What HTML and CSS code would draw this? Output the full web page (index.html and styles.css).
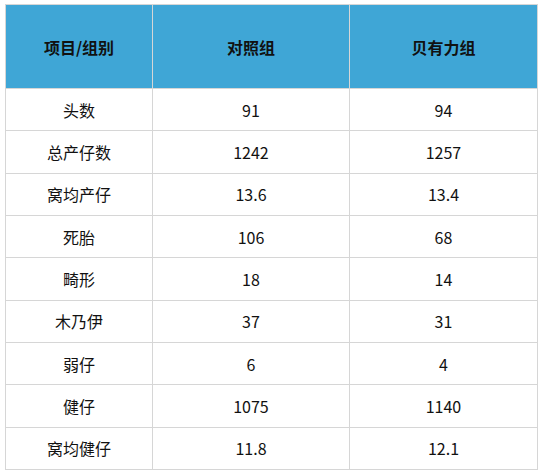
FILE: index.html
```html
<!DOCTYPE html>
<html lang="zh">
<head>
<meta charset="utf-8">
<link rel="stylesheet" href="styles.css">
</head>
<body>
<table class="data">
  <colgroup><col class="c1"><col class="c2"><col class="c3"></colgroup>
  <thead>
    <tr><th>项目/组别</th><th>对照组</th><th>贝有力组</th></tr>
  </thead>
  <tbody>
    <tr><td>头数</td><td>91</td><td>94</td></tr>
    <tr><td>总产仔数</td><td>1242</td><td>1257</td></tr>
    <tr><td>窝均产仔</td><td>13.6</td><td>13.4</td></tr>
    <tr><td>死胎</td><td>106</td><td>68</td></tr>
    <tr><td>畸形</td><td>18</td><td>14</td></tr>
    <tr><td>木乃伊</td><td>37</td><td>31</td></tr>
    <tr><td>弱仔</td><td>6</td><td>4</td></tr>
    <tr><td>健仔</td><td>1075</td><td>1140</td></tr>
    <tr><td>窝均健仔</td><td>11.8</td><td>12.1</td></tr>
  </tbody>
</table>
</body>
</html>
```
FILE: styles.css
```css
html, body { margin: 0; padding: 0; background: #fff; }
body { padding: 4px 0 0 5px; }
.data {
  border-collapse: collapse;
  width: 532px;
  font-family: "Noto Sans CJK SC", "Noto Sans", sans-serif;
  font-size: 16px;
  color: #111;
  table-layout: fixed;
}
.data th, .data td {
  border: 1px solid #d6d6d6;
  text-align: center;
  vertical-align: middle;
  padding: 0;
}
.data th {
  background: #3fa6d6;
  font-weight: bold;
  color: #111;
}
.data thead tr { height: 84px; }
.data tbody tr { height: 42.33px; }
.c1 { width: 147px; }
.c2 { width: 197px; }
.c3 { width: 188px; }
```
